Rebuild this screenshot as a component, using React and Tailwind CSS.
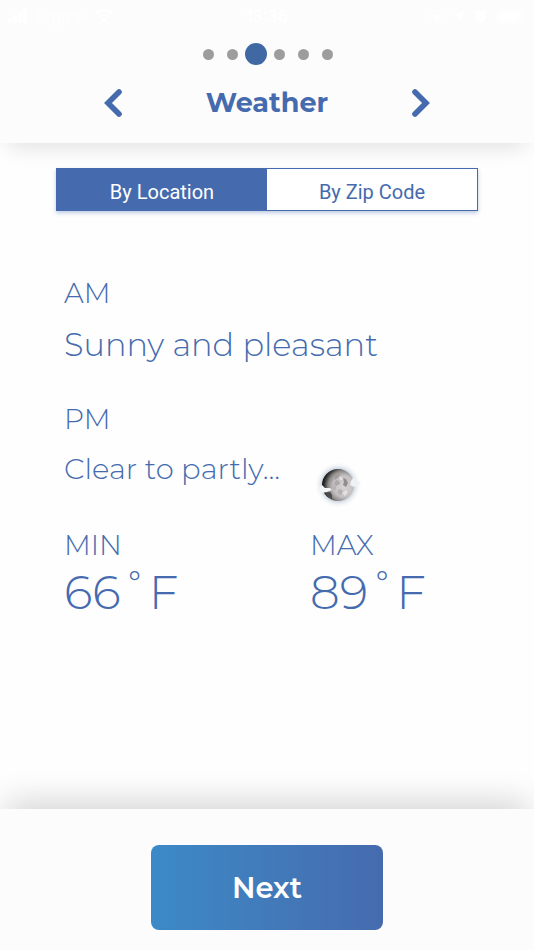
import React, { useState } from 'react';

const steps = ['Welcome', 'Profile', 'Weather', 'Alerts', 'Units', 'Finish'];
const currentStep = 2;

// Phone status bar, white on the pale header
const StatusBar = () => {
  return (
    <div className="flex h-8 items-center justify-between px-2 font-['Inter',sans-serif] text-base text-white">
      <div className="flex flex-1 items-center gap-2">
        <svg width="20" height="14" viewBox="0 0 20 14" fill="currentColor" aria-hidden="true">
          <rect x="0" y="9" width="4" height="5" rx="1" />
          <rect x="5" y="6" width="4" height="8" rx="1" />
          <rect x="10" y="3" width="4" height="11" rx="1" />
          <rect x="15" y="0" width="4" height="14" rx="1" />
        </svg>
        <span>Digicel</span>
        <svg width="18" height="14" viewBox="0 0 18 14" fill="none" stroke="currentColor" strokeWidth="2" aria-hidden="true">
          <path d="M1 5a11 11 0 0 1 16 0M4 8a7 7 0 0 1 10 0" />
          <circle cx="9" cy="11" r="1" />
        </svg>
      </div>
      <span className="font-semibold">13:36</span>
      <div className="flex flex-1 items-center justify-end gap-2">
        <svg width="14" height="14" viewBox="0 0 14 14" fill="none" stroke="currentColor" aria-hidden="true">
          <circle cx="7" cy="7" r="6" />
          <rect x="5" y="6" width="4" height="3" fill="currentColor" />
        </svg>
        <svg width="14" height="14" viewBox="0 0 14 14" fill="currentColor" aria-hidden="true">
          <path d="M13 1L1 7h6v6z" />
        </svg>
        <svg width="14" height="14" viewBox="0 0 14 14" fill="currentColor" aria-hidden="true">
          <circle cx="7" cy="8" r="5" />
          <circle cx="3" cy="3" r="2" />
          <circle cx="11" cy="3" r="2" />
        </svg>
        <svg width="30" height="14" viewBox="0 0 30 14" fill="none" stroke="currentColor" aria-hidden="true">
          <rect x="1" y="1" width="25" height="12" rx="3" />
          <rect x="3" y="3" width="20" height="8" rx="1" fill="currentColor" />
          <path d="M28 5v4" />
        </svg>
      </div>
    </div>
  );
};

const StepDots = () => {
  return (
    <ol className="flex h-11 items-center justify-center gap-[13px] pl-px">
      {steps.map((step, i) => (
        <li
          key={step}
          aria-label={step}
          className={
            i === currentStep
              ? '-mx-1.5 size-[22px] rounded-full bg-[#4069a3]'
              : 'size-[11px] rounded-full bg-[#9d9d9d]'
          }
        />
      ))}
    </ol>
  );
};

const Chevron = ({ d }) => {
  return (
    <svg width="18" height="30" viewBox="0 0 18 30" fill="none" stroke="currentColor" strokeWidth="5.6" strokeLinecap="round" strokeLinejoin="miter" aria-hidden="true">
      <path d={d} />
    </svg>
  );
};

const Moon = () => {
  return (
    <svg width="48" height="48" viewBox="0 0 48 48" role="img" aria-label="Partly cloudy night">
      <defs>
        <radialGradient id="glow">
          <stop offset="0.62" stopColor="#a9b9cb" stopOpacity="0.8" />
          <stop offset="0.8" stopColor="#d5dce5" stopOpacity="0.35" />
          <stop offset="1" stopColor="#ffffff" stopOpacity="0" />
        </radialGradient>
        <radialGradient id="surface" cx="0.68" cy="0.54" r="0.68">
          <stop offset="0" stopColor="#d8d4d5" />
          <stop offset="0.5" stopColor="#c3bebf" />
          <stop offset="0.72" stopColor="#8b8888" />
          <stop offset="0.88" stopColor="#3a3939" />
          <stop offset="1" stopColor="#111111" />
        </radialGradient>
        <filter id="soft" x="-30%" y="-30%" width="160%" height="160%">
          <feGaussianBlur stdDeviation="0.6" />
        </filter>
      </defs>
      <circle cx="24" cy="24" r="24" fill="url(#glow)" />
      <circle cx="24" cy="24" r="16" fill="url(#surface)" />
      <g filter="url(#soft)">
        <path d="M29 17l3 1 2 4-2 4-3-2 1-3z" fill="#918d8e" />
        <path d="M23 12l3 1-1 3-4 3-1-3z" fill="#a29e9f" />
        <path d="M22 19l3 1 1 3-4 2-2-2z" fill="#ada8a9" />
        <path d="M24 29l3-1 2 3-2 3-3-1z" fill="#b5b0b1" />
        <path d="M28 32l4-3 2 2-3 4z" fill="#e4e1e2" />
        <path d="M25 16l3 0 1 3-3 0z" fill="#e2dfe0" />
        <path d="M18 24l4 1 0 4-3 0z" fill="#b9b4b5" />
        <path d="M11 32l5-1 2 3 0 4z" fill="#4c4a4a" />
        <path d="M3 29l5-5 3 3 5 0 2 2-5 2-5 1z" fill="#f3f4f5" />
        <path d="M37 20l3-4 2 5 5 1-7 4-4-2z" fill="#f0f1f2" />
      </g>
    </svg>
  );
};

const Temperature = ({ label, value }) => {
  return (
    <div>
      <dt className="text-[28px] leading-8">{label}</dt>
      <dd className="text-[47px] leading-16">{value}</dd>
    </div>
  );
};

const App = () => {
  const [tab, setTab] = useState('location');

  const tabClass = (name) =>
    tab === name
      ? 'flex-1 bg-[#456bae] pt-1 text-white'
      : 'flex-1 bg-white pt-1 text-[#456bae]';

  return (
    <div className="flex min-h-screen flex-col bg-[#fefefe] font-['Montserrat','Inter',sans-serif] text-[#456bae]">
      <header className="bg-[#fcfcfc] pb-6 shadow-[0_12px_20px_-8px_rgba(0,0,0,0.12)]">
        <StatusBar />
        <StepDots />
        <div className="flex items-center justify-between px-[104px] pt-[11px]">
          <button type="button" aria-label="Previous">
            <Chevron d="M15 4L4 15l11 11" />
          </button>
          <h1 className="text-[27px] leading-8 font-bold">Weather</h1>
          <button type="button" aria-label="Next page">
            <Chevron d="M3 4l11 11L3 26" />
          </button>
        </div>
      </header>

      <main className="flex-1">
        <div className="mx-14 mt-[25px] flex h-[43px] border border-[#456bae] font-[Roboto,sans-serif] text-xl shadow-[0_2px_4px_rgba(69,107,174,0.35)]">
          <button type="button" aria-pressed={tab === 'location'} onClick={() => setTab('location')} className={tabClass('location')}>
            By Location
          </button>
          <button type="button" aria-pressed={tab === 'zip'} onClick={() => setTab('zip')} className={tabClass('zip')}>
            By Zip Code
          </button>
        </div>

        <section className="px-16 pt-[66px] font-light">
          <h2 className="text-[28px] leading-8">AM</h2>
          <p className="mt-4 text-[32px] leading-10">Sunny and pleasant</p>

          <h2 className="mt-[38px] text-[28px] leading-8">PM</h2>
          <div className="mt-3.5 flex items-start gap-[34px]">
            <p className="text-[29px] leading-10">Clear to partly...</p>
            <div className="-mb-6 pt-3">
              <Moon />
            </div>
          </div>

          <dl className="mt-10 grid grid-cols-[246px_1fr]">
            <Temperature label="MIN" value="66˚F" />
            <Temperature label="MAX" value="89˚F" />
          </dl>
        </section>
      </main>

      <footer className="flex justify-center bg-[#fcfcfc] pt-9 pb-5 shadow-[0_-14px_30px_-6px_rgba(0,0,0,0.16)]">
        <button type="button" className="h-[85px] w-[232px] rounded-lg bg-linear-to-r from-[#3b8ac7] to-[#456bae] text-[29px] font-semibold text-white">
          Next
        </button>
      </footer>
    </div>
  );
};

export default App;
